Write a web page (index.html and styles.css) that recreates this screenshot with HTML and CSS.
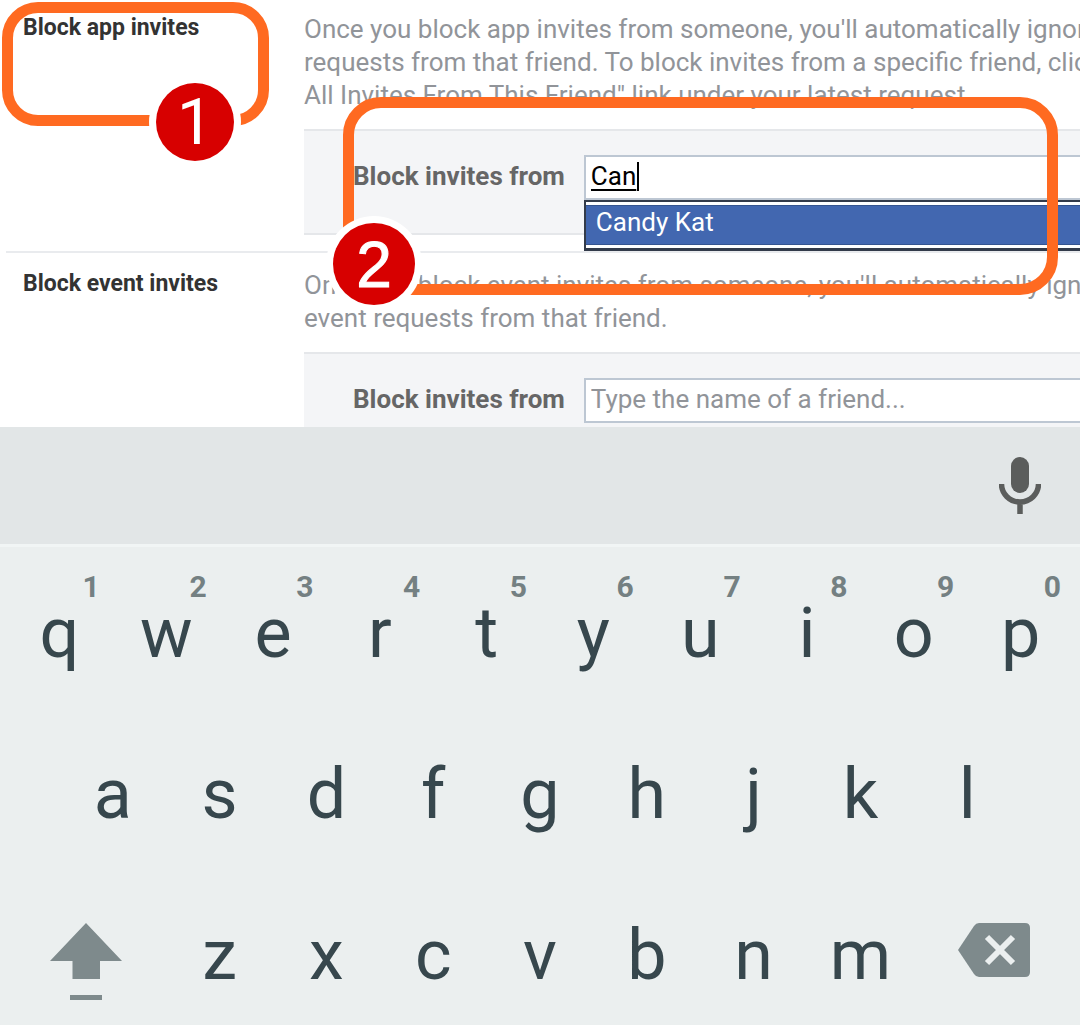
FILE: index.html
```html
<!DOCTYPE html>
<html lang="en">
<head>
<meta charset="utf-8">
<meta name="viewport" content="width=device-width, initial-scale=1">
<title>Manage Blocking</title>
<link rel="stylesheet" href="styles.css">
</head>
<body>
<main class="settings">
  <section class="section">
    <h2 class="title">Block app invites</h2>
    <div class="content">
      <p class="description">Once you block app invites from someone, you'll automatically ignore future app<br>requests from that friend. To block invites from a specific friend, click the "Ignore<br>All Invites From This Friend" link under your latest request.</p>
      <div class="panel">
        <label class="label" for="app-invites">Block invites from</label>
        <div class="field">
          <input class="input composing" id="app-invites" type="text" value="Can" autocomplete="off" spellcheck="false">
          <span class="caret"></span>
          <ul class="suggestions"><li class="suggestion">Candy Kat</li></ul>
        </div>
      </div>
    </div>
  </section>
  <section class="section">
    <h2 class="title">Block event invites</h2>
    <div class="content">
      <p class="description">Once you block event invites from someone, you'll automatically ignore future<br>event requests from that friend.</p>
      <div class="panel">
        <label class="label" for="event-invites">Block invites from</label>
        <div class="field">
          <input class="input" id="event-invites" type="text" placeholder="Type the name of a friend...">
        </div>
      </div>
    </div>
  </section>
  <div class="callout callout-one"><span class="badge">1</span></div>
  <div class="callout callout-two"><span class="badge">2</span></div>
</main>
<div class="keyboard">
  <div class="toolbar">
    <button class="mic" type="button" aria-label="Voice input">
      <svg width="42" height="58" viewBox="0 0 42 58"><rect x="12" y="0" width="18" height="36" rx="9" fill="#5b5d5c"/><path d="M2.500 27a18.500 18 0 0 0 37 0M21 45v12" fill="none" stroke="#5b5d5c" stroke-width="5.500"/></svg>
    </button>
  </div>
  <div class="keys">
    <button class="key" type="button">q<span class="hint">1</span></button>
    <button class="key" type="button">w<span class="hint">2</span></button>
    <button class="key" type="button">e<span class="hint">3</span></button>
    <button class="key" type="button">r<span class="hint">4</span></button>
    <button class="key" type="button">t<span class="hint">5</span></button>
    <button class="key" type="button">y<span class="hint">6</span></button>
    <button class="key" type="button">u<span class="hint">7</span></button>
    <button class="key" type="button">i<span class="hint">8</span></button>
    <button class="key" type="button">o<span class="hint">9</span></button>
    <button class="key" type="button">p<span class="hint">0</span></button>
    <button class="key row-start" type="button">a</button>
    <button class="key" type="button">s</button>
    <button class="key" type="button">d</button>
    <button class="key" type="button">f</button>
    <button class="key" type="button">g</button>
    <button class="key" type="button">h</button>
    <button class="key" type="button">j</button>
    <button class="key" type="button">k</button>
    <button class="key" type="button">l</button>
    <button class="key wide" type="button" aria-label="Shift">
      <svg width="72" height="78" viewBox="0 0 72 78"><path d="M36 0 72 38H50V56H22.500V38H0ZM20 72H52V77H20Z" fill="#7e8a8c"/></svg>
    </button>
    <button class="key" type="button">z</button>
    <button class="key" type="button">x</button>
    <button class="key" type="button">c</button>
    <button class="key" type="button">v</button>
    <button class="key" type="button">b</button>
    <button class="key" type="button">n</button>
    <button class="key" type="button">m</button>
    <button class="key wide" type="button" aria-label="Delete">
      <svg width="72" height="54" viewBox="0 0 72 54"><path d="M21 0H67Q72 0 72 5V49Q72 54 67 54H21Q18 54 16 51L0 27 16 3Q18 0 21 0Z" fill="#7e8a8c"/><path d="M29 14 55 40M55 14 29 40" stroke="#ebefef" stroke-width="6" fill="none"/></svg>
    </button>
  </div>
</div>
</body>
</html>
```
FILE: styles.css
```css
* { box-sizing: border-box; }

body {
  margin: 0;
  height: 100vh;
  display: flex;
  flex-direction: column;
  overflow: hidden;
  background: #fff;
  font-family: Roboto, "Liberation Sans", sans-serif;
}

.settings {
  position: relative;
  flex: 1;
  min-height: 0;
  overflow: hidden;
  padding-left: 6px;
}

.section {
  display: grid;
  grid-template-columns: 281px 1fr;
  padding: 16px 0 16px 17px;
  border-top: 2px solid #e9ebee;
}

.section:first-child {
  border-top: 0;
  padding-top: 13px;
}

.title {
  margin: 0;
  font-size: 23px;
  line-height: 30px;
  font-weight: 700;
  color: #333;
}

.content { min-width: 0; }

.description {
  margin: 0 0 17px;
  font-size: 26px;
  line-height: 33px;
  white-space: nowrap;
  color: #919499;
}

.panel {
  display: flex;
  gap: 19px;
  height: 106px;
  padding: 24px 0 0 49px;
  background: #f4f5f7;
  border: solid #e5e7ea;
  border-width: 2px 0;
}

.label {
  font-size: 26px;
  line-height: 42px;
  font-weight: 700;
  white-space: nowrap;
  color: #666;
}

.field {
  position: relative;
  flex: 1;
  min-width: 0;
}

.input {
  display: block;
  width: 100%;
  height: 45px;
  margin: 0;
  padding: 0 5px 3px;
  border: 2px solid #bdc7d3;
  border-right: 0;
  border-radius: 0;
  outline: 0;
  background: #fff;
  font: 26px/38px Roboto, "Liberation Sans", sans-serif;
  color: #000;
}

.input::placeholder {
  color: #919499;
  opacity: 1;
}

.composing {
  text-decoration: underline 2px;
  text-underline-offset: 4px;
}

.caret {
  position: absolute;
  top: 7px;
  left: 53px;
  width: 2px;
  height: 29px;
  background: #000;
}

.suggestions {
  position: absolute;
  top: 45px;
  left: 0;
  right: 0;
  margin: 0;
  padding: 3px 0;
  list-style: none;
  background: #fff;
  border: solid #333b4a;
  border-width: 2px 0 3px 2px;
}

.suggestion {
  padding: 0 10px 6px;
  border: solid #35548f;
  border-width: 1px 0;
  background: #4267b0;
  color: #fff;
  font-size: 26px;
  line-height: 32px;
}

.callout {
  position: absolute;
  border: 11px solid #ff6a21;
  pointer-events: none;
}

.callout-one {
  left: 2px;
  top: 2px;
  width: 267px;
  height: 124px;
  border-radius: 36px;
}

.callout-two {
  left: 343px;
  top: 97px;
  width: 715px;
  height: 198px;
  border-radius: 38px;
}

.badge {
  position: absolute;
  border-radius: 50%;
  background: #d70000;
  color: #fff;
  text-align: center;
  font-size: 64px;
  box-shadow: 0 0 0 7px #fff;
}

.callout-one .badge {
  left: 143px;
  top: 70px;
  width: 78px;
  height: 78px;
  line-height: 80px;
}

.callout-two .badge {
  left: -21px;
  top: 115px;
  width: 82px;
  height: 82px;
  line-height: 84px;
  font-family: "Liberation Sans", sans-serif;
  -webkit-text-stroke: 1px #fff;
}

.keyboard { background: #ebefef; }

.toolbar {
  display: flex;
  justify-content: flex-end;
  align-items: center;
  height: 120px;
  padding-right: 39px;
  background: #e2e6e7;
  border-bottom: 3px solid #f1f5f5;
}

.mic {
  display: flex;
  padding: 0;
  border: 0;
  background: none;
}

.keys {
  display: grid;
  grid-template-columns: repeat(20, 1fr);
  grid-template-rows: 161px 161px 156px;
  padding: 0 6px;
}

.key {
  position: relative;
  grid-column: span 2;
  display: flex;
  justify-content: center;
  align-items: flex-start;
  min-width: 0;
  margin: 0;
  padding: 46px 0 0;
  border: 0;
  background: none;
  font: 70px/80px Roboto, "Liberation Sans", sans-serif;
  color: #37474d;
}

.row-start { grid-column: 2 / span 2; }

.wide {
  grid-column: span 3;
  padding-top: 54px;
}

.hint {
  position: absolute;
  top: 22px;
  right: 13px;
  font-size: 30px;
  line-height: 36px;
  font-weight: 700;
  color: #748082;
}
```
